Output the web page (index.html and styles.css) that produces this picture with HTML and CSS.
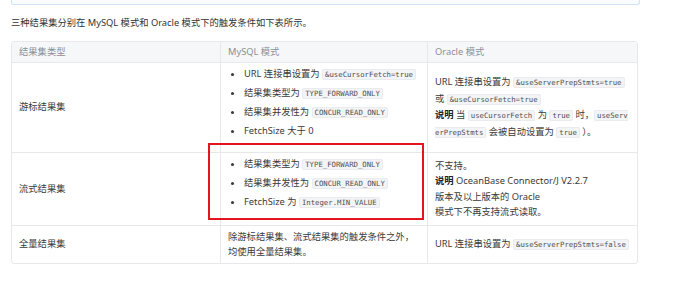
FILE: index.html
```html
<!DOCTYPE html>
<html lang="zh-CN">
<head>
    <meta charset="UTF-8">
    <meta name="viewport" content="width=device-width, initial-scale=1.0">
    <title>结果集触发条件</title>
    <link rel="stylesheet" href="styles.css">
</head>
<body>
    <div class="page">
        <div class="note"></div>
        <p class="intro">三种结果集分别在 MySQL 模式和 Oracle 模式下的触发条件如下表所示。</p>

        <div class="table-box">
            <div class="table-wrap">
                <table>
                    <colgroup>
                        <col class="c1">
                        <col class="c2">
                        <col class="c3">
                    </colgroup>
                    <thead>
                        <tr class="head">
                            <th>结果集类型</th>
                            <th>MySQL 模式</th>
                            <th>Oracle 模式</th>
                        </tr>
                    </thead>
                    <tbody>
                        <tr class="row-cursor">
                            <td>游标结果集</td>
                            <td>
                                <ul>
                                    <li>URL 连接串设置为 <code>&amp;useCursorFetch=true</code></li>
                                    <li>结果集类型为 <code>TYPE_FORWARD_ONLY</code></li>
                                    <li>结果集并发性为 <code>CONCUR_READ_ONLY</code></li>
                                    <li>FetchSize 大于 0</li>
                                </ul>
                            </td>
                            <td class="wrap">URL 连接串设置为 <code>&amp;useServerPrepStmts=true</code><br>或 <code>&amp;useCursorFetch=true</code><br><b>说明</b> 当 <code>useCursorFetch</code> 为 <code>true</code> 时，<code>useServerPrepStmts</code> 会被自动设置为 <code>true</code> ）。</td>
                        </tr>
                        <tr class="row-stream">
                            <td>流式结果集</td>
                            <td>
                                <ul>
                                    <li>结果集类型为 <code>TYPE_FORWARD_ONLY</code></li>
                                    <li>结果集并发性为 <code>CONCUR_READ_ONLY</code></li>
                                    <li>FetchSize 为 <code>Integer.MIN_VALUE</code></li>
                                </ul>
                            </td>
                            <td>不支持。<br><b>说明</b> OceanBase Connector/J V2.2.7<br>版本及以上版本的 Oracle<br>模式下不再支持流式读取。</td>
                        </tr>
                        <tr class="row-full">
                            <td>全量结果集</td>
                            <td>除游标结果集、流式结果集的触发条件之外，<br>均使用全量结果集。</td>
                            <td>URL 连接串设置为 <code>&amp;useServerPrepStmts=false</code></td>
                        </tr>
                    </tbody>
                </table>
            </div>
            <div class="mark"></div>
        </div>
    </div>
</body>
</html>
```

FILE: styles.css
```css
body {
    margin: 0;
    background: #ffffff;
    font-family: "Noto Sans", "Noto Sans CJK SC", sans-serif;
    font-size: 9.3px;
    line-height: 15.5px;
    color: #3a3a3a;
}

.page {
    padding-left: 11px;
}

.note {
    width: 627px;
    height: 4px;
    border: 1px solid #cfe2f8;
    border-top: none;
    border-radius: 0 0 3px 3px;
    background: #fafcff;
}

.intro {
    margin: 10px 0 10px;
    color: #333;
}

.table-box {
    position: relative;
    width: 627px;
}

.table-wrap {
    border: 1px solid #e6e8eb;
    border-radius: 3px;
    overflow: hidden;
}

table {
    width: 625px;
    table-layout: fixed;
    border-collapse: separate;
    border-spacing: 0;
}

.c1 { width: 209px; }
.c2 { width: 207px; }
.c3 { width: 209px; }

th,
td {
    padding: 0 7px;
    text-align: left;
    vertical-align: middle;
    border-right: 1px solid #e6e8eb;
    border-bottom: 1px solid #e6e8eb;
}

th:last-child,
td:last-child {
    border-right: none;
}

tbody tr:last-child td {
    border-bottom: none;
}

.head th {
    height: 20px;
    font-weight: normal;
    color: #8a8f97;
    background: #f6f7f9;
}

.row-cursor td { height: 89px; }
.row-stream td { height: 72px; }
.row-full td { height: 37px; }

td.wrap {
    word-break: break-all;
}

ul {
    margin: 0 0 10px;
    padding-left: 16px;
}

li {
    margin-bottom: 2.5px;
}

li:last-child {
    margin-bottom: 0;
}

b {
    font-weight: 700;
    color: #222;
}

code {
    font-family: "DejaVu Sans Mono", "Liberation Mono", monospace;
    font-size: 7.3px;
    color: #505050;
    background: #f3f4f6;
    border: 1px solid #e9ebee;
    border-radius: 2px;
    padding: 0 2px;
}

/* red annotation frame over the streaming row */
.mark {
    position: absolute;
    left: 197px;
    top: 102px;
    width: 212px;
    height: 73px;
    border: 2px solid #e3151f;
    pointer-events: none;
}
```
